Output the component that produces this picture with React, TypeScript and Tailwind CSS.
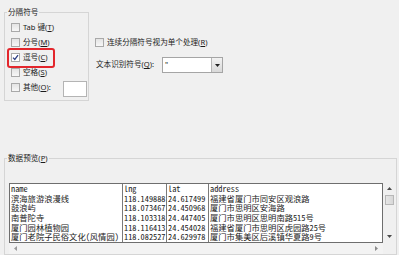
import React from "react";

function Box({ checked }: { checked?: boolean }) {
  return (
    <span
      className={
        "flex h-[9px] w-[9px] shrink-0 items-center justify-center border border-[#a9a9a9] " +
        (checked ? "bg-white" : "bg-gradient-to-b from-[#e4e4e4] to-[#f7f7f7]")
      }
    >
      {checked && (
        <svg width="7" height="7" viewBox="0 0 7 7">
          <path d="M1 3.6 L2.8 5.4 L6 1.2" fill="none" stroke="#2d3f86" strokeWidth="1.3" />
        </svg>
      )}
    </span>
  );
}

function U({ c }: { c: string }) {
  return <span className="underline underline-offset-[1px]">{c}</span>;
}

const rows = [
  ["name", "lng", "lat", "address"],
  ["滨海旅游浪漫线", "118.149888", "24.617499", "福建省厦门市同安区观浪路"],
  ["鼓浪屿", "118.073467", "24.450968", "厦门市思明区安海路"],
  ["南普陀寺", "118.103318", "24.447405", "厦门市思明区思明南路515号"],
  ["厦门园林植物园", "118.116413", "24.454028", "福建省厦门市思明区虎园路25号"],
  ["厦门老院子民俗文化(风情园)", "118.082527", "24.629978", "厦门市集美区后溪镇华夏路9号"],
];

function Col({ i, cls }: { i: number; cls: string }) {
  return (
    <div className={"flex flex-col overflow-hidden " + cls}>
      {rows.map((r, k) => (
        <div key={k} className="h-[9.67px] whitespace-nowrap pl-[1px] leading-[9.67px]">
          {r[i]}
        </div>
      ))}
    </div>
  );
}

export default function App() {
  return (
    <div className="flex h-[255px] w-[399px] flex-col overflow-hidden bg-[#f0f0f0] font-['Noto_Sans','Noto_Sans_CJK_SC',sans-serif] text-[7.6px] text-[#1b1b1b]">
      <div className="flex items-start">
        <fieldset className="ml-[4px] mt-[7px] w-[85px] border border-[#d5d5d5] pb-[5px] pl-[2px] pt-[3px]">
          <legend className="px-[1px] leading-[10px]">分隔符号</legend>
          <div className="ml-[4px] flex flex-col">
            <div className="flex h-[15px] items-center gap-[3px]">
              <Box />
              <span>
                Tab 键(<U c="T" />)
              </span>
            </div>
            <div className="flex h-[15px] items-center gap-[3px]">
              <Box />
              <span>
                分号(<U c="M" />)
              </span>
            </div>
            <div className="relative flex h-[15px] items-center gap-[3px]">
              <Box checked />
              <span>
                逗号(<U c="C" />)
              </span>
              <div className="absolute left-[-4px] top-[-2px] h-[20px] w-[48px] rounded-[3px] border-2 border-[#e3262c]" />
            </div>
            <div className="flex h-[15px] items-center gap-[3px]">
              <Box />
              <span>
                空格(<U c="S" />)
              </span>
            </div>
            <div className="flex h-[15px] items-center gap-[3px]">
              <Box />
              <span>
                其他(<U c="O" />):
              </span>
              <div className="ml-[9px] mt-[2px] h-[16px] w-[24px] border border-[#b4b4b4] bg-white" />
            </div>
          </div>
        </fieldset>

        <div className="ml-[6px] flex flex-col pt-[35px]">
          <div className="flex h-[15px] items-center gap-[3px]">
            <Box />
            <span>
              连续分隔符号视为单个处理(<U c="R" />)
            </span>
          </div>
          <div className="mt-[7px] flex h-[16px] items-center">
            <span className="ml-[1px] w-[66px]">
              文本识别符号(<U c="Q" />):
            </span>
            <div className="flex h-[16px] w-[61px] items-stretch border border-[#a5a5a5] bg-white">
              <span className="flex-1 pl-[2px] leading-[12px]">"</span>
              <div className="flex w-[11px] items-center justify-center border-l border-[#b5b5b5] bg-gradient-to-b from-[#f2f2f2] to-[#d9d9d9]">
                <svg width="5" height="3" viewBox="0 0 5 3">
                  <path d="M0 0 H5 L2.5 3 Z" fill="#202020" />
                </svg>
              </div>
            </div>
          </div>
        </div>
      </div>

      <fieldset className="ml-[4px] mt-[52px] w-[393px] flex-1 border border-[#d5d5d5] pl-[2px] pt-[20px]">
        <legend className="px-[1px] leading-[10px]">
          数据预览(<U c="P" />)
        </legend>
        <div className="ml-[2px] flex flex-col">
          <div className="flex">
            <div className="flex h-[60px] w-[374px] border border-[#6e6e6e] bg-white font-['Noto_Sans_Mono_CJK_SC','Liberation_Mono','Noto_Sans_CJK_SC',monospace] text-[8.3px] text-[#222]">
              <Col i={0} cls="w-[113px] border-r border-[#7a7a7a]" />
              <Col i={1} cls="w-[44px] border-r border-[#7a7a7a]" />
              <Col i={2} cls="w-[42px] border-r border-[#7a7a7a]" />
              <Col i={3} cls="flex-1" />
            </div>
            <div className="flex h-[60px] w-[12px] flex-col items-center">
              <svg className="mt-[4px]" width="5" height="3" viewBox="0 0 5 3">
                <path d="M0 3 H5 L2.5 0 Z" fill="#4a4a4a" />
              </svg>
              <div className="mt-[5px] h-[10px] w-[9px] border border-[#b8b8b8] bg-gradient-to-r from-[#e6e6e6] to-[#d8d8d8]" />
              <div className="flex-1" />
              <svg className="mb-[5px]" width="5" height="3" viewBox="0 0 5 3">
                <path d="M0 0 H5 L2.5 3 Z" fill="#4a4a4a" />
              </svg>
            </div>
          </div>
          <div className="flex h-[11px] w-[374px] items-center justify-between bg-[#f3f3f3] px-[5px]">
            <svg width="3" height="5" viewBox="0 0 3 5">
              <path d="M3 0 V5 L0 2.5 Z" fill="#9a9a9a" />
            </svg>
            <svg width="3" height="5" viewBox="0 0 3 5">
              <path d="M0 0 V5 L3 2.5 Z" fill="#8a8a8a" />
            </svg>
          </div>
        </div>
      </fieldset>
    </div>
  );
}
